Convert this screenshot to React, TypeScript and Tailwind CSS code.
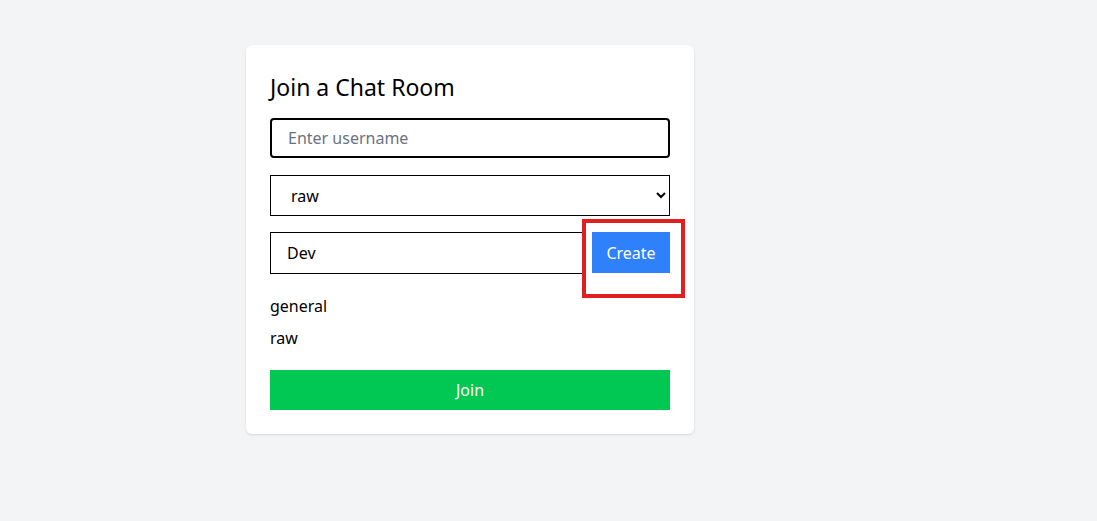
import { useState } from 'react';

export default function App() {
  const [username, setUsername] = useState('');
  const [room, setRoom] = useState('raw');
  const [newRoom, setNewRoom] = useState('Dev');
  const rooms = ['general', 'raw'];

  return (
    <div className="min-h-screen bg-[#f3f4f6] pt-[45px] pl-[246px] font-['Noto_Sans','Open_Sans',sans-serif] text-black">
      <div className="w-[448px] bg-white rounded-md shadow px-6 pt-[26px] pb-6">
        <h1 className="text-[23px] mb-[15px] leading-8">Join a Chat Room</h1>

        <input
          autoFocus
          className="w-full h-10 px-4 border-2 border-black rounded-[4px] mb-[17px] outline-none placeholder:text-gray-500"
          placeholder="Enter username"
          value={username}
          onChange={(e) => setUsername(e.target.value)}
        />

        <select
          className="block w-full h-[41px] px-4 border border-black mb-4 bg-white"
          value={room}
          onChange={(e) => setRoom(e.target.value)}
        >
          {rooms.map((r) => (
            <option key={r} value={r}>{r}</option>
          ))}
        </select>

        <div className="flex gap-2 mb-5">
          <input
            className="flex-1 h-[42px] px-4 border border-black outline-none"
            value={newRoom}
            onChange={(e) => setNewRoom(e.target.value)}
          />
          <div className="relative">
            <button className="w-[78px] h-[41px] bg-[#2f80fb] text-white">Create</button>
            {/* highlight box */}
            <div className="absolute left-[-10px] top-[-13px] w-[103px] h-[79px] border-4 border-[#e21f1f]"></div>
          </div>
        </div>

        <ul className="space-y-2 mb-5">
          {rooms.map((r) => (
            <li key={r} className="leading-6">{r}</li>
          ))}
        </ul>

        <button className="w-full h-10 bg-[#00c853] text-white">Join</button>
      </div>
    </div>
  );
}
